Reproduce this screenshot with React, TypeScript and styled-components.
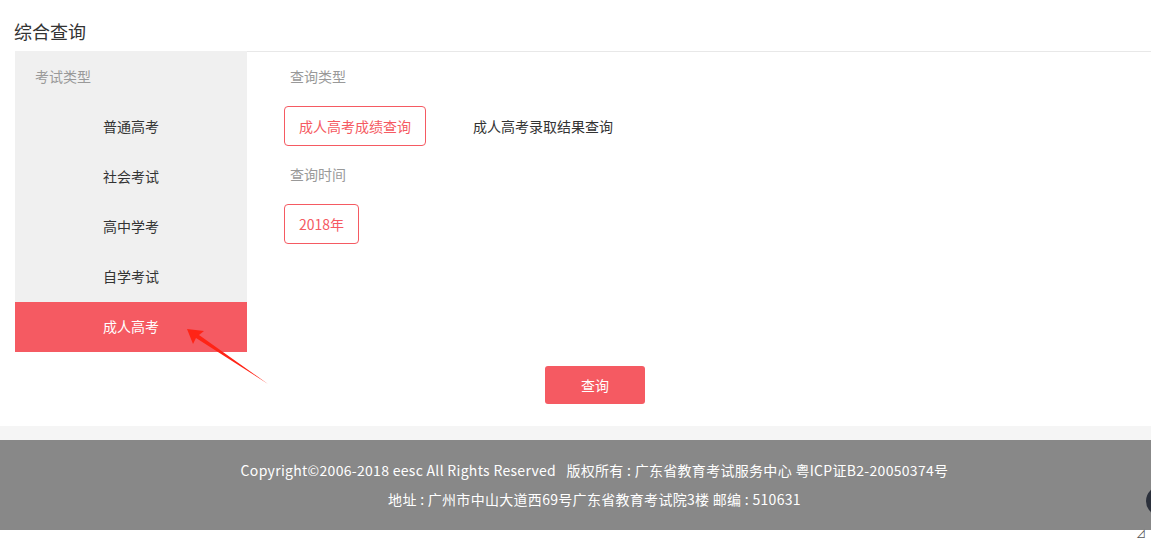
import React from "react";
import styled, { createGlobalStyle } from "styled-components";

const Global = createGlobalStyle`
  html, body { margin: 0; padding: 0; background: #fff; }
  body { font-family: "Noto Sans CJK SC", "Noto Sans", sans-serif; color: #333; }
  * { box-sizing: border-box; }
`;

const RED = "#f55a62";

const Page = styled.div`
  position: relative;
  width: 1151px;
  height: 540px;
  overflow: hidden;
`;

const Title = styled.h1`
  margin: 0;
  height: 51px;
  padding: 18px 0 0 14px;
  font-size: 18px;
  font-weight: 400;
  line-height: 26px;
  color: #333;
`;

const Panel = styled.div`
  display: flex;
  margin-left: 15px;
  border-top: 1px solid #e8e8e8;
`;

const Sidebar = styled.div`
  width: 232px;
  background: #f0f0f0;
  display: flex;
  flex-direction: column;
  margin-top: -1px;
  padding-top: 1px;
`;

const SideHeading = styled.div`
  height: 50px;
  line-height: 49px;
  padding-left: 20px;
  font-size: 14px;
  color: #999;
`;

const SideItem = styled.div<{ $active?: boolean }>`
  height: 50px;
  line-height: 48px;
  text-align: center;
  font-size: 14px;
  color: ${(p) => (p.$active ? "#fff" : "#333")};
  background: ${(p) => (p.$active ? RED : "transparent")};
`;

const Content = styled.div`
  flex: 1;
  padding-left: 37px;
`;

const Label = styled.div`
  height: 50px;
  line-height: 49px;
  padding-left: 6px;
  font-size: 14px;
  color: #999;
`;

const Options = styled.div`
  display: flex;
  gap: 32px;
  margin: 4px 0;
`;

const Option = styled.div<{ $active?: boolean }>`
  height: 40px;
  line-height: 38px;
  padding: 0 14px;
  font-size: 14px;
  border: 1px solid ${(p) => (p.$active ? RED : "transparent")};
  border-radius: 4px;
  color: ${(p) => (p.$active ? RED : "#333")};
`;

const ButtonRow = styled.div`
  padding: 14px 0 0 545px;
  height: 74px;
`;

const QueryButton = styled.button`
  width: 100px;
  height: 38px;
  border: none;
  border-radius: 3px;
  background: ${RED};
  color: #fff;
  font-family: inherit;
  font-size: 14px;
`;

const Strip = styled.div`
  height: 14px;
  background: #f5f5f5;
`;

const Footer = styled.footer`
  height: 90px;
  background: #888888;
  padding: 16px 0 0 38px;
  text-align: center;
  color: #fff;
  font-size: 14px;
  line-height: 29px;
  letter-spacing: 0.3px;
`;

const Arrow = styled.svg`
  position: absolute;
  left: 0;
  top: 0;
  pointer-events: none;
`;

const Widget = styled.div`
  position: absolute;
  left: 1146px;
  top: 486px;
  width: 30px;
  height: 30px;
  border-radius: 50%;
  background: #2b303b;
`;

const Corner = styled.div`
  position: absolute;
  left: 1136px;
  top: 528px;
  font-size: 10px;
  color: #555;
  line-height: 11px;
`;

export default function App() {
  const items = ["普通高考", "社会考试", "高中学考", "自学考试", "成人高考"];
  return (
    <Page>
      <Global />
      <Title>综合查询</Title>
      <Panel>
        <Sidebar>
          <SideHeading>考试类型</SideHeading>
          {items.map((it) => (
            <SideItem key={it} $active={it === "成人高考"}>
              {it}
            </SideItem>
          ))}
        </Sidebar>
        <Content>
          <Label>查询类型</Label>
          <Options>
            <Option $active>成人高考成绩查询</Option>
            <Option>成人高考录取结果查询</Option>
          </Options>
          <Label>查询时间</Label>
          <Options>
            <Option $active>2018年</Option>
          </Options>
        </Content>
      </Panel>
      <ButtonRow>
        <QueryButton>查询</QueryButton>
      </ButtonRow>
      <Strip />
      <Footer>
        <div>Copyright©2006-2018 eesc All Rights Reserved&nbsp;&nbsp;&nbsp;版权所有 : 广东省教育考试服务中心 粤ICP证B2-20050374号</div>
        <div>地址 : 广州市中山大道西69号广东省教育考试院3楼 邮编 : 510631</div>
      </Footer>
      <Arrow width="1151" height="540" viewBox="0 0 1151 540">
        <polygon
          points="187,329 204,331 199,335 268,384 196,338 193,344"
          fill="#ff2416"
        />
      </Arrow>
      <Widget />
      <Corner>⊿</Corner>
    </Page>
  );
}
